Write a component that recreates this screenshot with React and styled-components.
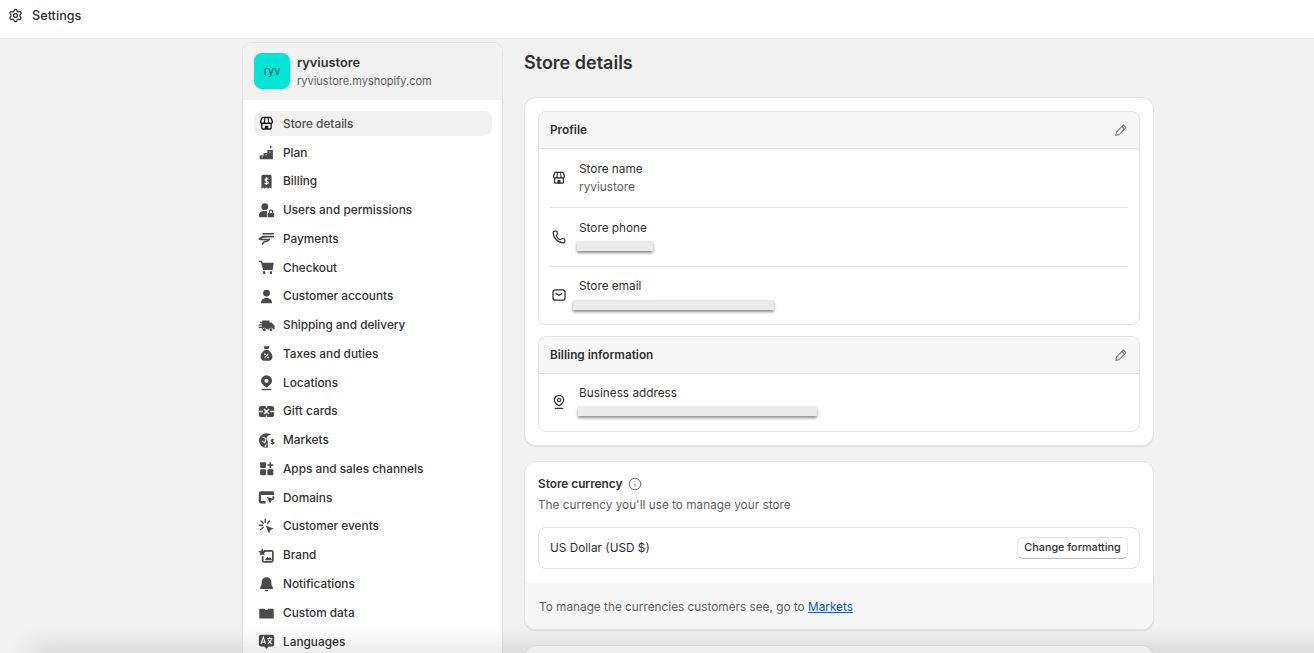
import styled, { createGlobalStyle } from "styled-components";
import { Settings, Phone, Info } from "lucide-react";

const GlobalStyle = createGlobalStyle`
  html, body {
    margin: 0;
    height: 100%;
    overflow: hidden;
    background: #f1f1f1;
    font-family: Inter, "Noto Sans", sans-serif;
    color: #303030;
  }
  * {
    box-sizing: border-box;
  }
`;

const navIcons = {
  store: (
    <>
      <path d="M3 7.700 5 3h10l2 4.700c0 1.300-1 2.300-2.300 2.300-.9 0-1.700-.5-2.200-1.200-.5.7-1.400 1.200-2.500 1.200s-2-.5-2.500-1.200C7 9.500 6.200 10 5.300 10 4 10 3 9 3 7.700Z" fill="none" stroke="currentColor" strokeWidth="1.600" strokeLinejoin="round" />
      <path d="M4.500 10v5.200c0 .7.600 1.300 1.300 1.300h8.400c.7 0 1.300-.6 1.300-1.300V10" fill="none" stroke="currentColor" strokeWidth="1.600" />
      <path d="M8 3.500 7.500 8.500M12 3.500l.5 5" fill="none" stroke="currentColor" strokeWidth="1.300" />
      <path d="M8 16.500v-3c0-.6.400-1 1-1h2c.6 0 1 .4 1 1v3Z" fill="currentColor" />
    </>
  ),
  plan: (
    <>
      <path d="M2 18v-4.500h4.500V10.500H11V7h6.500v11Z" fill="currentColor" />
      <path d="M14 2h1.700v3H14Z" fill="currentColor" />
      <path d="M4.500 15.500h1M9 12.500h1M13.500 9.500h1" stroke="#fff" strokeWidth="1.300" />
    </>
  ),
  billing: (
    <>
      <path d="M4 4A2 2 0 0 1 6 2h8a2 2 0 0 1 2 2v14.500l-2.300-1.500-1.900 1.500-1.800-1.500-1.800 1.500-1.900-1.500L4 18.500Z" fill="currentColor" />
      <path d="M12.300 7.500c-.7-1-4-1.100-4 .7 0 1.900 3.800 1 3.800 3 0 1.700-3.300 1.700-4.200.6M10 5v9" fill="none" stroke="#fff" strokeWidth="1.400" />
    </>
  ),
  users: (
    <>
      <circle cx="8" cy="5.500" r="4" fill="currentColor" />
      <path d="M1 15.800c0-3.600 3-5.300 7-5.300 1 0 1.800.1 2.500.4V18H3c-1.200 0-2-.8-2-2.200Z" fill="currentColor" />
      <rect x="11.300" y="12.800" width="7.700" height="5.200" rx="1" fill="currentColor" />
      <path d="M13.300 12.800v-1.300a1.900 1.900 0 0 1 3.800 0v1.300" fill="none" stroke="currentColor" strokeWidth="1.300" />
    </>
  ),
  payments: (
    <path d="M6 4.500h12M5 7.800h13M1.500 10.500c2.500-2.100 5-2.700 8.500-2.700M2.500 11.300h10.500c-1 1.800-3 2.400-5.500 2.400M7.500 13.700 5.300 16.500" fill="none" stroke="currentColor" strokeWidth="1.800" strokeLinecap="round" />
  ),
  checkout: (
    <>
      <path d="M1 2h3.700l.8 2.500H18.500l-1.300 8.500H6L3.500 3.800H1Z" fill="currentColor" />
      <path d="M6 14.500h2.500v3H6ZM14 14.500h2.500v3H14Z" fill="currentColor" />
    </>
  ),
  customer: (
    <>
      <circle cx="10" cy="6" r="4" fill="currentColor" />
      <path d="M3.500 18c0-4 2.900-6.200 6.500-6.200s6.500 2.200 6.500 6.200Z" fill="currentColor" />
    </>
  ),
  shipping: (
    <>
      <path d="M5 4h8.500v2.500h2.500l3.500 3.800V14.500h-1.800a2.400 2.400 0 0 0-4.600 0H9.900a2.400 2.400 0 0 0-4.600 0H4.500v-1.500H.8v-1.500h3.700V10H.8V8.500h3.700V7H2V5.500h3Z" fill="currentColor" />
      <circle cx="7.500" cy="15" r="1.700" fill="currentColor" />
      <circle cx="15.300" cy="15" r="1.700" fill="currentColor" />
    </>
  ),
  taxes: (
    <>
      <path d="M6.500 1.500h7l-1.300 3.500H7.800Z" fill="currentColor" />
      <path d="M8 6h4c2.800 1.900 5 5 5 7.800 0 2.700-1.800 4.700-4 4.700H7c-2.200 0-4-2-4-4.700C3 11 5.200 7.900 8 6Z" fill="currentColor" />
      <path d="m7.800 15 4.400-4.500" stroke="#fff" strokeWidth="1.300" />
      <circle cx="8.200" cy="11" r="1.100" fill="#fff" />
      <circle cx="11.800" cy="14.500" r="1.100" fill="#fff" />
    </>
  ),
  location: (
    <>
      <path d="M10 1.500a6.500 6.500 0 0 0-6.500 6.500c0 3.600 3.700 6.300 6.500 8 2.800-1.700 6.500-4.400 6.500-8A6.500 6.500 0 0 0 10 1.500Z" fill="currentColor" />
      <circle cx="10" cy="8" r="2.400" fill="#fff" />
      <path d="M5 18.200h10" stroke="currentColor" strokeWidth="1.600" strokeLinecap="round" />
    </>
  ),
  gift: (
    <>
      <rect x="1" y="3.500" width="18" height="13" rx="3" fill="currentColor" />
      <path d="M1 10h5M14 10h5M10 3.500v2M10 14.500v2" stroke="#fff" strokeWidth="1.500" />
      <path d="M7 7 13 13M13 7 7 13" stroke="#fff" strokeWidth="1.700" />
    </>
  ),
  markets: (
    <>
      <path d="M9.500 1.500a8.500 8.500 0 1 0 2 16.800V10.500a4 4 0 0 1 5-6.200A8.500 8.500 0 0 0 9.500 1.500Z" fill="currentColor" />
      <path d="M5.500 6 9.500 8 8 12.500 4.500 10.500M9.800 14.500 8.300 18" stroke="#fff" strokeWidth="1.300" fill="none" />
      <path d="M18.800 9.500c-.6-.9-3.400-.9-3.400.6 0 1.700 3.400.9 3.400 2.600 0 1.500-3 1.500-3.800.5M17 8v7" fill="none" stroke="currentColor" strokeWidth="1.300" />
    </>
  ),
  apps: (
    <>
      <rect x="2.500" y="2.500" width="7" height="7" rx="1.200" fill="currentColor" />
      <rect x="2.500" y="11" width="7" height="7" rx="1.200" fill="currentColor" />
      <rect x="11" y="11" width="7" height="7" rx="1.200" fill="currentColor" />
      <path d="M14.500 2.500v7M11 6h7" stroke="currentColor" strokeWidth="1.800" />
    </>
  ),
  domains: (
    <>
      <path d="M3.500 2.500h13.500a2 2 0 0 1 2 2V7H1V5a2.500 2.500 0 0 1 2.500-2.500Z" fill="currentColor" />
      <path d="M1 7h2.500v7h5.500v3H3.500A2.500 2.500 0 0 1 1 14.500Z" fill="currentColor" />
      <path d="M17 8.500h2V12h-2Z" fill="currentColor" />
      <path d="m10.500 9 8.500 3-3.300 1.500-1.500 3.800Z" fill="currentColor" />
    </>
  ),
  events: (
    <>
      <path d="m9 9 9.500 3.400-3.800 1.600-1.700 4.300Z" fill="currentColor" />
      <path d="M8.500 1.500v4M1.500 8.500h4M3.500 3.500l2.700 2.700M3 13.500l3.200-2.300M13.500 3.500l-2.300 3" stroke="currentColor" strokeWidth="1.600" strokeLinecap="round" />
    </>
  ),
  brand: (
    <>
      <path d="M7 3.500h9A2.500 2.500 0 0 1 18.500 6v10a2.500 2.500 0 0 1-2.500 2.500H7A2.500 2.500 0 0 1 4.500 16v-5h2v5.500h10V5.500H7Z" fill="currentColor" />
      <path d="M5 1.500 6.500 4.500l3 .5-2.200 2.100.6 3L5 8.700 2.100 10.100l.6-3L.5 5l3-.5Z" fill="currentColor" />
      <path d="m8 15.500 3-4.300 1.900 2 1.300-1.600 2.300 3.900Z" fill="currentColor" />
    </>
  ),
  bell: (
    <>
      <path d="M10 1.500C6.500 1.500 4.300 4.200 4.300 7.300V10L2.300 13.800c-.3.600.1 1.400.9 1.400h13.600c.8 0 1.200-.8.900-1.400L15.700 10V7.300C15.700 4.200 13.500 1.500 10 1.500Z" fill="currentColor" />
      <path d="M7.500 16.200a2.600 2.600 0 0 0 5 0Z" fill="currentColor" />
    </>
  ),
  data: (
    <path d="M2.500 5.500h5c.7 0 1 .6 1.100 1.700h2.800c.1-1.100.4-1.700 1.100-1.700h5a1 1 0 0 1 1 1V17H1.500V6.500a1 1 0 0 1 1-1Z" fill="currentColor" />
  ),
  languages: (
    <>
      <path d="M3.500 2h13A2.500 2.500 0 0 1 19 4.500v9a2.500 2.500 0 0 1-2.500 2.500h-4L10 18.800 7.500 16h-4A2.500 2.500 0 0 1 1 13.500v-9A2.500 2.500 0 0 1 3.500 2Z" fill="currentColor" />
      <path d="m3.500 13 2.700-8 2.700 8M4.500 10.700h3.400" fill="none" stroke="#fff" strokeWidth="1.300" />
      <path d="M10.800 6.500h6M13.800 4.800v1.700M11.500 7.500l4.700 5.500M16.200 7.500 11.500 13" fill="none" stroke="#fff" strokeWidth="1.200" />
    </>
  ),
};

const navItems = [
  ["store", "Store details"],
  ["plan", "Plan"],
  ["billing", "Billing"],
  ["users", "Users and permissions"],
  ["payments", "Payments"],
  ["checkout", "Checkout"],
  ["customer", "Customer accounts"],
  ["shipping", "Shipping and delivery"],
  ["taxes", "Taxes and duties"],
  ["location", "Locations"],
  ["gift", "Gift cards"],
  ["markets", "Markets"],
  ["apps", "Apps and sales channels"],
  ["domains", "Domains"],
  ["events", "Customer events"],
  ["brand", "Brand"],
  ["bell", "Notifications"],
  ["data", "Custom data"],
  ["languages", "Languages"],
];

const StoreIcon = () => (
  <RowSvg viewBox="0 0 20 20">{navIcons.store}</RowSvg>
);

const MailIcon = () => (
  <RowSvg viewBox="0 0 20 20" fill="none" stroke="currentColor" strokeWidth="1.600">
    <rect x="2.500" y="3.500" width="15" height="13" rx="2.800" />
    <path d="M6.500 8.300 10 10.300l3.500-2" strokeLinecap="round" />
  </RowSvg>
);

const PinIcon = () => (
  <RowSvg viewBox="0 0 20 20" fill="none" stroke="currentColor" strokeWidth="1.500">
    <path d="M10 1.800a5.800 5.800 0 0 0-5.800 5.800c0 3.200 3.300 5.600 5.800 7.100 2.500-1.500 5.800-3.900 5.800-7.100A5.800 5.800 0 0 0 10 1.800Z" />
    <circle cx="10" cy="7.600" r="2" />
    <path d="M5.500 18h9" strokeLinecap="round" />
  </RowSvg>
);

const PencilIcon = () => (
  <EditSvg viewBox="0 0 20 20" fill="none" stroke="currentColor" strokeWidth="1.600" strokeLinejoin="round">
    <path d="m13 3.800 3.200 3.200-8.700 8.800-4 .8.800-4Z" />
    <path d="m11.200 5.800 3.200 3.200" />
  </EditSvg>
);

const App = () => {
  return (
    <>
      <GlobalStyle />
      <Page>
        <TopBar>
          <Settings size={15} strokeWidth={2} />
          <TopTitle>Settings</TopTitle>
        </TopBar>
        <Body>
          <Sidebar>
            <ShopHeader>
              <Avatar>ryv</Avatar>
              <div>
                <ShopName>ryviustore</ShopName>
                <ShopDomain>ryviustore.myshopify.com</ShopDomain>
              </div>
            </ShopHeader>
            <Nav>
              {navItems.map(([icon, label], index) => (
                <NavItem key={label} $active={index === 0}>
                  <NavSvg viewBox="0 0 20 20" $active={index === 0}>
                    {navIcons[icon]}
                  </NavSvg>
                  {label}
                </NavItem>
              ))}
            </Nav>
          </Sidebar>
          <Content>
            <PageTitle>Store details</PageTitle>
            <Card>
              <CardBody>
                <Panel>
                  <PanelHeader>
                    <PanelTitle>Profile</PanelTitle>
                    <PencilIcon />
                  </PanelHeader>
                  <Row>
                    <StoreIcon />
                    <RowText>
                      <RowLabel>Store name</RowLabel>
                      <RowValue>ryviustore</RowValue>
                    </RowText>
                  </Row>
                  <Row>
                    <RowSvgWrap>
                      <Phone size={14} strokeWidth={2} />
                    </RowSvgWrap>
                    <RowText>
                      <RowLabel>Store phone</RowLabel>
                      <RowValue>
                        <Redacted $left={-2} $top={4} $width={76} />
                      </RowValue>
                    </RowText>
                  </Row>
                  <Row>
                    <MailIcon />
                    <RowText>
                      <RowLabel>Store email</RowLabel>
                      <RowValue>
                        <Redacted $left={-6} $top={5} $width={201} />
                      </RowValue>
                    </RowText>
                  </Row>
                </Panel>
                <Panel>
                  <PanelHeader>
                    <PanelTitle>Billing information</PanelTitle>
                    <PencilIcon />
                  </PanelHeader>
                  <Row $short>
                    <PinIcon />
                    <RowText>
                      <RowLabel>Business address</RowLabel>
                      <RowValue>
                        <Redacted $left={-1} $top={4} $width={239} />
                      </RowValue>
                    </RowText>
                  </Row>
                </Panel>
              </CardBody>
            </Card>
            <Card>
              <CurrencyBody>
                <CurrencyTitle>
                  Store currency
                  <Info size={14} strokeWidth={1.5} color="#616161" />
                </CurrencyTitle>
                <Subtitle>The currency you'll use to manage your store</Subtitle>
                <CurrencyBox>
                  US Dollar (USD $)
                  <Button>Change formatting</Button>
                </CurrencyBox>
              </CurrencyBody>
              <CardFooter>
                To manage the currencies customers see, go to{" "}
                <FooterLink href="#">Markets</FooterLink>
              </CardFooter>
            </Card>
            <Card />
          </Content>
        </Body>
        <BottomEdge />
      </Page>
    </>
  );
};

const Page = styled.div`
  position: relative;
  height: 100vh;
  overflow: hidden;
`;

const TopBar = styled.header`
  display: flex;
  align-items: center;
  gap: 9px;
  height: 39px;
  padding: 0 0 8px 8px;
  background: #fff;
  border-bottom: 1px solid #e6e6e6;
  color: #303030;
`;

const TopTitle = styled.span`
  font-size: 12.7px;
  font-weight: 500;
`;

const Body = styled.div`
  display: flex;
  align-items: flex-start;
  padding: 3px 0 0 242px;
`;

const Sidebar = styled.aside`
  flex: 0 0 261px;
  height: 700px;
  background: #fff;
  border: 1px solid #e3e3e3;
  border-radius: 10px 10px 0 0;
  overflow: hidden;
`;

const ShopHeader = styled.div`
  display: flex;
  align-items: center;
  gap: 7px;
  height: 57px;
  padding: 0 11px 1px;
  background: #f1f1f1;
`;

const Avatar = styled.div`
  display: flex;
  align-items: center;
  justify-content: center;
  width: 36px;
  height: 36px;
  border-radius: 8px;
  background: #00e6d6;
  color: #0b5f58;
  font-size: 11px;
`;

const ShopName = styled.div`
  font-size: 12.8px;
  font-weight: 600;
  line-height: 20px;
`;

const ShopDomain = styled.div`
  font-size: 11px;
  line-height: 17px;
  color: #616161;
`;

const Nav = styled.nav`
  display: flex;
  flex-direction: column;
  gap: 3.78px;
  padding: 11px 10px 0 11px;
`;

const NavItem = styled.div`
  display: flex;
  align-items: center;
  gap: 8px;
  height: 25px;
  padding: 0.5px 4px 0;
  border-radius: 8px;
  font-size: 11.82px;
  font-weight: 450;
  color: ${(p) => (p.$active ? "#4a4a4a" : "#303030")};
  background: ${(p) => (p.$active ? "#f1f1f1" : "transparent")};
`;

const NavSvg = styled.svg`
  flex: none;
  width: 17px;
  height: 17px;
  color: ${(p) => (p.$active ? "#1a1a1a" : "#4a4a4a")};
`;

const Content = styled.main`
  flex: 0 0 630px;
  margin-left: 21px;
`;

const PageTitle = styled.h1`
  margin: 0 0 24px;
  padding-top: 11px;
  font-size: 18px;
  line-height: 20px;
  font-weight: 600;
`;

const Card = styled.section`
  margin-bottom: 15px;
  min-height: 40px;
  background: #fff;
  border: 1px solid #e3e3e3;
  border-radius: 12px;
  box-shadow: 0 1px 0 rgba(0, 0, 0, 0.07);
  overflow: hidden;
`;

const CardBody = styled.div`
  display: flex;
  flex-direction: column;
  gap: 11px;
  padding: 13px 13px 13px;
`;

const Panel = styled.div`
  border: 1px solid #e3e3e3;
  border-radius: 8px;
  overflow: hidden;
`;

const PanelHeader = styled.div`
  display: flex;
  align-items: center;
  justify-content: space-between;
  height: 37px;
  padding: 0 10px 0 11px;
  background: #f7f7f7;
  border-bottom: 1px solid #e3e3e3;
`;

const PanelTitle = styled.h2`
  margin: 0;
  font-size: 11.8px;
  font-weight: 600;
`;

const EditSvg = styled.svg`
  width: 16px;
  height: 16px;
  color: #8a8a8a;
`;

const Row = styled.div`
  display: flex;
  align-items: center;
  gap: 11px;
  height: ${(p) => (p.$short ? "57px" : "58.3px")};
  margin: 0 11px;
  color: #303030;
  & + & {
    border-top: 1px solid #e3e3e3;
  }
`;

const RowSvg = styled.svg`
  flex: none;
  width: 16px;
  height: 16px;
  margin: 0 1px;
`;

const RowSvgWrap = styled.span`
  flex: none;
  display: flex;
  justify-content: center;
  width: 18px;
`;

const RowText = styled.div`
  display: flex;
  flex-direction: column;
`;

const RowLabel = styled.div`
  font-size: 11.8px;
  line-height: 18px;
`;

const RowValue = styled.div`
  position: relative;
  min-height: 18px;
  font-size: 11.8px;
  line-height: 18px;
  color: #616161;
`;

const Redacted = styled.div`
  position: absolute;
  left: ${(p) => p.$left}px;
  top: ${(p) => p.$top}px;
  width: ${(p) => p.$width}px;
  height: 10px;
  background: #ebebeb;
  box-shadow: 0 2px 3px rgba(0, 0, 0, 0.45);
`;

const CurrencyBody = styled.div`
  padding: 13px 13px 14px;
`;

const CurrencyTitle = styled.h2`
  display: flex;
  align-items: center;
  gap: 6px;
  margin: 0;
  font-size: 11.8px;
  line-height: 18px;
  font-weight: 600;
`;

const Subtitle = styled.p`
  margin: 3px 0 13px;
  font-size: 11.8px;
  line-height: 18px;
  color: #616161;
`;

const CurrencyBox = styled.div`
  display: flex;
  align-items: center;
  justify-content: space-between;
  height: 42px;
  padding: 0 11px;
  border: 1px solid #e3e3e3;
  border-radius: 8px;
  font-size: 11.8px;
`;

const Button = styled.button`
  height: 22px;
  width: 111px;
  padding: 0;
  background: #fff;
  border: 1px solid #e3e3e3;
  border-bottom-color: #b5b5b5;
  border-radius: 6px;
  font-family: inherit;
  font-size: 10.8px;
  font-weight: 500;
  color: #303030;
`;

const CardFooter = styled.div`
  height: 46px;
  padding: 15px 13px 0 14px;
  background: #f7f7f7;
  font-size: 11.8px;
  line-height: 18px;
  color: #616161;
`;

const FooterLink = styled.a`
  color: #005bd3;
`;

const BottomEdge = styled.div`
  position: absolute;
  left: 30px;
  right: -30px;
  bottom: -12px;
  height: 12px;
  box-shadow: 0 -4px 26px rgba(0, 0, 0, 0.2);
`;

export default App;
